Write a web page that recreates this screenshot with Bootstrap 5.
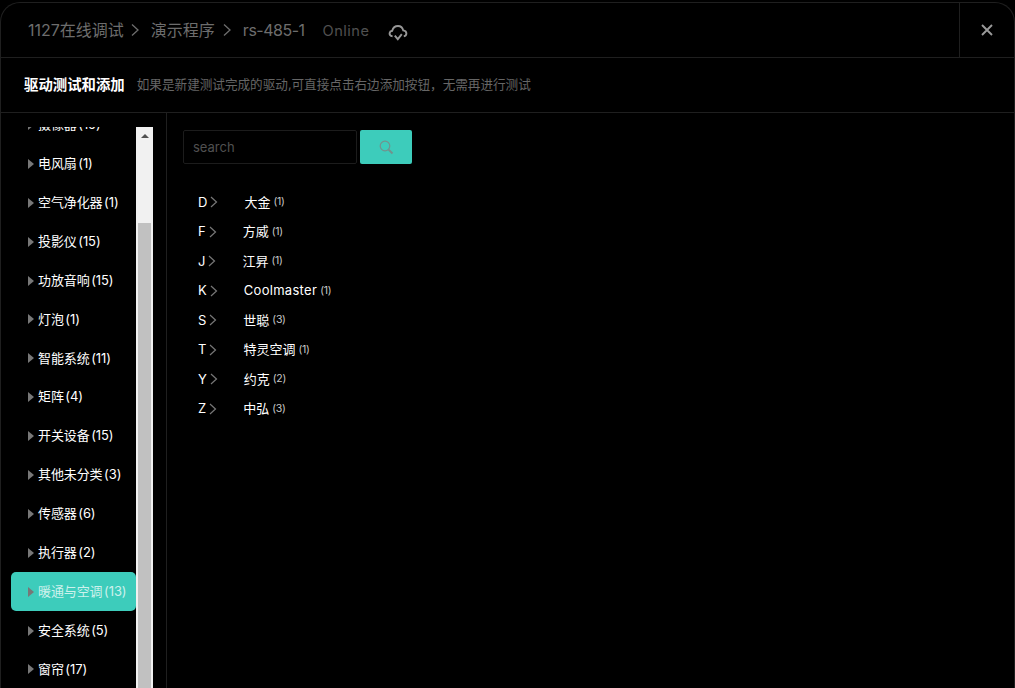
<!DOCTYPE html>
<html lang="zh"><head><meta charset="utf-8"><title>驱动测试和添加</title>
<link href="https://cdn.jsdelivr.net/npm/bootstrap@5.3.0/dist/css/bootstrap.min.css" rel="stylesheet">
<style>
html,body{height:100%;background:#000;overflow:hidden}
body{font-family:"Inter","Noto Sans CJK SC",sans-serif;color:#fff}
.frame{height:690px;margin-top:2px;border:1px solid #1f1f1f;border-bottom:0;border-radius:20px 20px 0 0;overflow:hidden}
.head-bar{height:55px;border-bottom:1px solid #1f1f1f}
.crumbs{padding-left:27px;color:#6d6d6d;font-size:16px}
.crumb-gap{margin:0 11px 0 6px}
.crumb-gap-b{margin:0 11px 0 7px}
.crumb-dev{letter-spacing:-.5px}
.online{font-size:14.6px;color:#505050;margin:3px 0 0 18px;letter-spacing:.5px}
.cloud-ico{margin:5px 0 0 18px}
.close-box{width:55px;border-left:1px solid #1f1f1f;color:#8c8c8c}
.sub-bar{height:55px;border-bottom:1px solid #1f1f1f;padding-left:23px}
.sub-title{font-size:14.4px;font-weight:600;color:#fff}
.sub-desc{font-size:12.6px;color:#666;margin-left:12px}
.side{width:166px;height:575px;border-right:1px solid #1f1f1f;padding:14px 13px 0 10px}
.side-list{width:126px;height:580px;overflow:hidden}
.side-items{margin:-21.5px 0 0;padding:0;list-style:none}
.side-item{height:38.9px;padding-left:17px;font-size:13px;color:#fff;gap:4px;border-radius:5px;word-spacing:-2px;letter-spacing:-.1px}
.side-item.active-cat{background:#3dccbb;color:#cdf1ec}
.tri{width:0;height:0;border-left:6px solid #777;border-top:5px solid transparent;border-bottom:5px solid transparent}
.sbar{width:17px;background:#f1f1f1;padding:0 2px}
.sbar-up{height:96px;padding-top:7px}
.sbar-arrow{width:0;height:0;margin:0 auto;border-bottom:4px solid #505050;border-left:4px solid transparent;border-right:4px solid transparent}
.sbar-thumb{height:480px;background:#c1c1c1}
.main-pane{padding:17px 0 0 16px}
.search-in{width:174px;height:34px;background:#000;border:1px solid #1c1c1c;border-radius:2px;color:#666;font-size:13px;padding:0 9px}
.search-in::placeholder{color:#505050}
.search-in:focus{outline:0}
.search-go{width:52px;height:34px;margin-left:3px;background:#3dccbb;border:0;border-radius:2px;padding:0}
.brand-list{margin:23.6px 0 0 15px;padding:0;list-style:none}
.brand-row{height:29.5px;font-size:13px}
.brand-chev{margin:0 26px 0 3px}
.brand-latin{letter-spacing:.3px}
.brand-count{font-size:10.5px;color:#c8c8c8;margin-left:3px;letter-spacing:-.3px}
</style></head>
<body>
<div class="frame d-flex flex-column">
  <div class="head-bar d-flex align-items-stretch justify-content-between">
    <div class="crumbs d-flex align-items-center">
      <span>1127在线调试</span>
      <svg class="crumb-gap" width="10" height="14" viewBox="0 0 10 14" fill="none" stroke="#6d6d6d" stroke-width="1.3"><path d="M2 1.5 8 7l-6 5.5"/></svg>
      <span>演示程序</span>
      <svg class="crumb-gap-b" width="10" height="14" viewBox="0 0 10 14" fill="none" stroke="#6d6d6d" stroke-width="1.3"><path d="M2 1.5 8 7l-6 5.5"/></svg>
      <span class="crumb-dev">rs-485-1</span>
      <span class="online">Online</span>
      <svg class="cloud-ico" width="20" height="18" viewBox="0 0 20 18" fill="none" stroke="#979797" stroke-width="1.9"><path d="M4.6 12.4C2.4 12 1.4 10.8 1.6 9.2 1.8 7.8 3 7 4.2 6.8 5 4 7.2 2 10 2c2.6 0 4.6 1.8 5.2 4.4 1.8.2 3.2 1.4 3.2 3.2 0 1.4-1 2.4-2.6 2.8"/><path d="M6.8 11.6l3 3.6 4-5"/></svg>
    </div>
    <div class="close-box d-flex align-items-center justify-content-center">
      <svg width="12" height="12" viewBox="0 0 12 12" stroke="#9a9a9a" stroke-width="1.9"><path d="M1 1l10 10M11 1 1 11"/></svg>
    </div>
  </div>
  <div class="sub-bar d-flex align-items-center">
    <span class="sub-title">驱动测试和添加</span>
    <span class="sub-desc">如果是新建测试完成的驱动,可直接点击右边添加按钮，无需再进行测试</span>
  </div>
  <div class="d-flex flex-grow-1">
    <div class="side d-flex">
      <div class="side-list">
        <ul class="side-items">
          <li class="side-item d-flex align-items-center"><i class="tri"></i><span>摄像器 (15)</span></li>
          <li class="side-item d-flex align-items-center"><i class="tri"></i><span>电风扇 (1)</span></li>
          <li class="side-item d-flex align-items-center"><i class="tri"></i><span>空气净化器 (1)</span></li>
          <li class="side-item d-flex align-items-center"><i class="tri"></i><span>投影仪 (15)</span></li>
          <li class="side-item d-flex align-items-center"><i class="tri"></i><span>功放音响 (15)</span></li>
          <li class="side-item d-flex align-items-center"><i class="tri"></i><span>灯泡 (1)</span></li>
          <li class="side-item d-flex align-items-center"><i class="tri"></i><span>智能系统 (11)</span></li>
          <li class="side-item d-flex align-items-center"><i class="tri"></i><span>矩阵 (4)</span></li>
          <li class="side-item d-flex align-items-center"><i class="tri"></i><span>开关设备 (15)</span></li>
          <li class="side-item d-flex align-items-center"><i class="tri"></i><span>其他未分类 (3)</span></li>
          <li class="side-item d-flex align-items-center"><i class="tri"></i><span>传感器 (6)</span></li>
          <li class="side-item d-flex align-items-center"><i class="tri"></i><span>执行器 (2)</span></li>
          <li class="side-item active-cat d-flex align-items-center"><i class="tri"></i><span>暖通与空调 (13)</span></li>
          <li class="side-item d-flex align-items-center"><i class="tri"></i><span>安全系统 (5)</span></li>
          <li class="side-item d-flex align-items-center"><i class="tri"></i><span>窗帘 (17)</span></li>
        </ul>
      </div>
      <div class="sbar">
        <div class="sbar-up"><div class="sbar-arrow"></div></div>
        <div class="sbar-thumb"></div>
      </div>
    </div>
    <div class="main-pane flex-grow-1">
      <div class="d-flex">
        <input class="search-in" type="text" placeholder="search">
        <button class="search-go d-flex align-items-center justify-content-center" type="button" aria-label="search">
          <svg width="15" height="15" viewBox="0 0 15 15" fill="none" stroke="#72928d" stroke-width="1.2"><circle cx="6" cy="6" r="4.8"/><path d="M9.6 9.6 13.5 13.5" stroke-width="2"/></svg>
        </button>
      </div>
      <ul class="brand-list">
        <li class="brand-row d-flex align-items-center"><span>D</span><svg class="brand-chev" width="8" height="12" viewBox="0 0 8 12" fill="none" stroke="#777" stroke-width="1.2"><path d="M1 1l5.5 5L1 11"/></svg><span>大金</span><span class="brand-count">(1)</span></li>
        <li class="brand-row d-flex align-items-center"><span>F</span><svg class="brand-chev" width="8" height="12" viewBox="0 0 8 12" fill="none" stroke="#777" stroke-width="1.2"><path d="M1 1l5.5 5L1 11"/></svg><span>方威</span><span class="brand-count">(1)</span></li>
        <li class="brand-row d-flex align-items-center"><span>J</span><svg class="brand-chev" width="8" height="12" viewBox="0 0 8 12" fill="none" stroke="#777" stroke-width="1.2"><path d="M1 1l5.5 5L1 11"/></svg><span>江昇</span><span class="brand-count">(1)</span></li>
        <li class="brand-row d-flex align-items-center"><span>K</span><svg class="brand-chev" width="8" height="12" viewBox="0 0 8 12" fill="none" stroke="#777" stroke-width="1.2"><path d="M1 1l5.5 5L1 11"/></svg><span class="brand-latin">Coolmaster</span><span class="brand-count">(1)</span></li>
        <li class="brand-row d-flex align-items-center"><span>S</span><svg class="brand-chev" width="8" height="12" viewBox="0 0 8 12" fill="none" stroke="#777" stroke-width="1.2"><path d="M1 1l5.5 5L1 11"/></svg><span>世聪</span><span class="brand-count">(3)</span></li>
        <li class="brand-row d-flex align-items-center"><span>T</span><svg class="brand-chev" width="8" height="12" viewBox="0 0 8 12" fill="none" stroke="#777" stroke-width="1.2"><path d="M1 1l5.5 5L1 11"/></svg><span>特灵空调</span><span class="brand-count">(1)</span></li>
        <li class="brand-row d-flex align-items-center"><span>Y</span><svg class="brand-chev" width="8" height="12" viewBox="0 0 8 12" fill="none" stroke="#777" stroke-width="1.2"><path d="M1 1l5.5 5L1 11"/></svg><span>约克</span><span class="brand-count">(2)</span></li>
        <li class="brand-row d-flex align-items-center"><span>Z</span><svg class="brand-chev" width="8" height="12" viewBox="0 0 8 12" fill="none" stroke="#777" stroke-width="1.2"><path d="M1 1l5.5 5L1 11"/></svg><span>中弘</span><span class="brand-count">(3)</span></li>
      </ul>
    </div>
  </div>
</div>
<script src="https://cdn.jsdelivr.net/npm/bootstrap@5.3.0/dist/js/bootstrap.bundle.min.js"></script>
</body></html>
